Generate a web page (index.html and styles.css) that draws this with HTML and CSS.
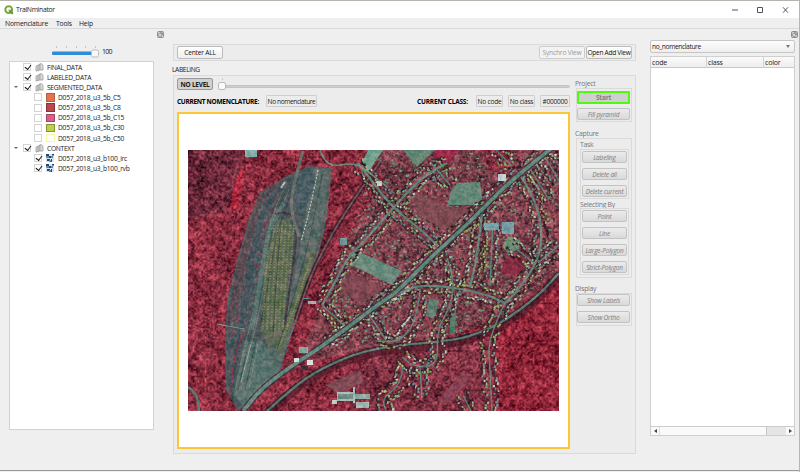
FILE: index.html
```html
<!DOCTYPE html>
<html lang="en">
<head>
<meta charset="utf-8">
<title>TraiNminator</title>
<link rel="stylesheet" href="styles.css">
</head>
<body>
<svg width="0" height="0" class="defs">
  <symbol id="float" viewBox="0 0 7 7"><rect x=".5" y=".5" width="6" height="6" rx="1" fill="#ccc" stroke="#8d8d8d"/><rect x="1.8" y="2.8" width="2.4" height="2.4" fill="#eee" stroke="#777" stroke-width=".6"/><path d="M3 1.8h2.3V4" fill="none" stroke="#777" stroke-width=".7"/></symbol>
  <symbol id="group" viewBox="0 0 9 9"><path d="M1 3.2 3.2 2v5L1 8.2z" fill="#ddd" stroke="#8c8c8c" stroke-width=".7"/><path d="M3.2 2.2 5 1v5.600L3.200 8z" fill="#eee" stroke="#8c8c8c" stroke-width=".7"/><path d="M5 .8h1.600l1.400 1.400V7H5z" fill="#ddd" stroke="#8c8c8c" stroke-width=".7"/></symbol>
  <symbol id="raster" viewBox="0 0 8 8"><path fill="#d5e3f0" d="M0 0h8v8H0z"/><path fill="#274766" d="M0 0h3v2H0zM3 2h2v2H3zM6 0h2v1.500H6zM1 5h3v2H1zM5 5h1v3H5z"/><path fill="#638db2" d="M0 2h3v2H0zM5 2h2v2H5zM3 6h2v2H3z"/></symbol>
</svg>
<div class="window">
  <header class="titlebar">
    <svg class="logo" viewBox="0 0 10 10"><circle cx="4.700" cy="4.700" r="3.400" fill="none" stroke="#76a83a" stroke-width="2"/><path d="M5 5l3.800 3.800" stroke="#5c9632" stroke-width="2"/><path d="M4.500 4.500h2L5 6z" fill="#e8c53c"/></svg>
    <span class="title">TraiNminator</span>
    <svg class="controls" viewBox="0 0 60 10"><path d="M1 5h6M26.500 2.500h5v5h-5zM52 2.300l5 5.400M57 2.300l-5 5.400" fill="none" stroke="#555" stroke-width="1"/></svg>
  </header>
  <nav class="menu"><span class="m1">Nomenclature</span><span class="m2">Tools</span><span>Help</span></nav>
  <main class="body">
    <aside class="left">
      <svg class="float"><use href="#float"/></svg>
      <div class="opacity">
        <svg class="slider" viewBox="0 0 48 14"><path d="M4.500 1v2M14.500 1v2M24.500 1v2M33.500 1v2M43.500 1v2" stroke="#c6c6c6"/><rect x="0" y="6.500" width="42" height="3.600" rx="1" fill="#308cd6"/><rect x="39.500" y="5" width="7" height="7" rx="1.500" fill="#fafafa" stroke="#bbb"/></svg>
        <span class="pct">100</span>
      </div>
      <div class="tree">
        <div class="row"><i class="arrow"></i><i class="check on"></i><svg class="gi"><use href="#group"/></svg><span>FINAL_DATA</span></div>
        <div class="row"><i class="arrow"></i><i class="check on"></i><svg class="gi"><use href="#group"/></svg><span>LABELED_DATA</span></div>
        <div class="row"><i class="arrow open"></i><i class="check on"></i><svg class="gi"><use href="#group"/></svg><span>SEGMENTED_DATA</span></div>
        <div class="row sub"><i class="check"></i><i class="sw c5"></i><span>D057_2018_u3_5b_C5</span></div>
        <div class="row sub"><i class="check"></i><i class="sw c8"></i><span>D057_2018_u3_5b_C8</span></div>
        <div class="row sub"><i class="check"></i><i class="sw c15"></i><span>D057_2018_u3_5b_C15</span></div>
        <div class="row sub"><i class="check"></i><i class="sw c30"></i><span>D057_2018_u3_5b_C30</span></div>
        <div class="row sub"><i class="check"></i><i class="sw c50"></i><span>D057_2018_u3_5b_C50</span></div>
        <div class="row"><i class="arrow open"></i><i class="check on"></i><svg class="gi"><use href="#group"/></svg><span>CONTEXT</span></div>
        <div class="row sub"><i class="check on"></i><svg class="ri"><use href="#raster"/></svg><span>D057_2018_u3_b100_irc</span></div>
        <div class="row sub"><i class="check on"></i><svg class="ri"><use href="#raster"/></svg><span>D057_2018_u3_b100_rvb</span></div>
      </div>
    </aside>
    <section class="center">
      <div class="toolbar"><button class="btn">Center ALL</button><span class="grow"></span><button class="btn off">Synchro View</button><button class="btn">Open Add View</button></div>
      <div class="caption">LABELING</div>
      <div class="labeling">
        <div class="work">
          <div class="level"><span class="nolevel">NO LEVEL</span><div class="track"><i class="tick"></i><i class="knob"></i></div></div>
          <div class="current"><b class="cn">CURRENT NOMENCLATURE:</b><span class="val nom">No nomenclature</span><span class="grow"></span><b class="cc">CURRENT CLASS:</b><span class="val code">No code</span><span class="val cls">No class</span><span class="val hex">#000000</span></div>
          <div class="view"><canvas id="map" width="371" height="261"></canvas></div>
        </div>
        <div class="side">
          <div class="lbl">Project</div>
          <div class="box project"><button class="act start">Start</button><button class="act">Fill pyramid</button></div>
          <div class="lbl capl">Capture</div>
          <div class="box capture">
            <div class="lbl in">Task</div>
            <div class="box inner"><button class="act">Labeling</button><button class="act">Delete all</button><button class="act">Delete current</button></div>
            <div class="lbl in">Selecting By</div>
            <div class="box inner"><button class="act">Point</button><button class="act">Line</button><button class="act">Large-Polygon</button><button class="act">Strict-Polygon</button></div>
          </div>
          <div class="lbl disl">Display</div>
          <div class="box display"><button class="act">Show Labels</button><button class="act">Show Ortho</button></div>
        </div>
      </div>
    </section>
    <aside class="right">
      <svg class="float"><use href="#float"/></svg>
      <div class="combo"><span>no_nomenclature</span><i></i></div>
      <div class="table">
        <div class="head"><span>code</span><span>class</span><span>color</span></div>
        <div class="empty"></div>
        <div class="scroll"><i class="la"></i><i class="thumb"></i><i class="rest"></i><i class="ra"></i></div>
      </div>
    </aside>
  </main>
</div>
<script src="map.js"></script>
</body>
</html>
```
FILE: styles.css
```css
* { box-sizing: border-box; }
body { margin: 0; background: #efefef; font: 7px/10px "Open Sans", "Noto Sans", sans-serif; letter-spacing: -.2px; color: #1a1a1a; }
.defs { position: absolute; }
.window { width: 800px; height: 472px; border-top: 1px solid #b5b5b0; border-right: 1px solid #b5b5b5; display: flex; flex-direction: column; overflow: hidden; }
.titlebar { height: 17px; background: #fff; display: flex; align-items: center; padding-left: 4px; flex: none; }
.logo { width: 10px; height: 10px; }
.title { margin-left: 2px; font-size: 6.800px; letter-spacing: -.3px; flex: 1; }
.controls { width: 60px; height: 10px; margin-right: 8px; }
.menu { height: 11px; flex: none; border-bottom: 1px solid #dadada; padding-left: 5px; display: flex; line-height: 11px; font-size: 6.800px; letter-spacing: -.2px; }
.m1 { width: 51px; } .m2 { width: 23px; }
.body { height: 442px; flex: none; display: flex; border-bottom: 1px solid #999; }
.left { width: 173px; padding: 2px 0 0 9px; display: flex; flex-direction: column; }
.float { width: 7px; height: 7px; flex: none; align-self: flex-end; margin-right: 9px; }
.opacity { display: flex; height: 23px; padding: 7px 0 0 43px; flex: none; }
.slider { width: 48px; height: 14px; flex: none; }
.pct { margin-left: 2px; letter-spacing: -.7px; padding-top: 2px; }
.tree { width: 145px; height: 369px; border: 1px solid #d2d2d2; background: #fff; }
.row { display: flex; align-items: center; height: 10.15px; white-space: nowrap; font-size: 6.700px; letter-spacing: -.3px; }
.row span { padding-top: 1px; }
.sub span { letter-spacing: -.26px; }
.arrow { width: 13px; display: flex; justify-content: center; padding-right: 2px; }
.arrow.open::after { content: ""; border: 2.500px solid transparent; border-top: 2.500px solid #666; border-bottom: 0; }
.check { width: 8px; height: 8px; border: 1px solid #d4d4d4; background: #fff; flex: none; display: block; }
.check.on::after { content: ""; display: block; width: 3px; height: 5px; margin: 0 0 0 1.500px; border: solid #111; border-width: 0 1px 1px 0; transform: translateY(-.5px) rotate(38deg); }
.gi { width: 9px; height: 9px; margin: 0 3px 0 4px; }
.sub { padding-left: 24px; }
.sw { width: 9px; height: 8.500px; margin: 0 3px 0 4px; border: 1px solid #a9654a; }
.c5 { background: #e77148; } .c8 { background: #b7484b; border-color: #873337; } .c15 { background: #e15989; border-color: #a34565; } .c30 { background: #bccf48; border-color: #87953a; } .c50 { background: #fff; border-color: #f7f9a2; }
.ri { width: 8px; height: 8px; margin: 0 4px; }
.center { width: 463px; padding-top: 15px; flex: none; }
.toolbar { height: 17px; border: 1px solid #dadada; background: #ececec; display: flex; padding: 1px 3px; gap: 1px; }
.grow { flex: 1; }
.btn, .act { font: inherit; height: 12px; padding: 0; border: 1px solid #bdbdbd; border-radius: 2px; background: linear-gradient(#fff, #eee); color: #111; line-height: 9px; white-space: nowrap; }
.btn { width: 46px; font-size: 6.600px; letter-spacing: -.3px; height: 13px; line-height: 10px; }
.btn:first-child { letter-spacing: -.2px; }
.btn.off { color: #999; background: #f3f3f3; border-color: #ccc; letter-spacing: -.15px; }
.caption { height: 14px; line-height: 17px; margin-left: -1px; font-size: 6.600px; letter-spacing: -.35px; }
.labeling { height: 379px; border: 1px solid #dadada; background: #ececec; display: flex; padding: 2px 3px 3px; }
.work { width: 393px; flex: none; }
.level { display: flex; height: 13px; gap: 5px; }
.nolevel { width: 36px; height: 12px; border: 1px solid #999; border-radius: 2px; background: #d0d0d0; font-weight: 700; font-size: 6.500px; line-height: 11px; text-align: center; letter-spacing: -.25px; flex: none; }
.track { flex: 1; height: 3px; margin-top: 7px; background: #d0d0d0; border: 1px solid #c3c3c3; border-radius: 2px; position: relative; }
.knob { position: absolute; left: -1px; top: -4px; width: 8px; height: 8px; border: 1px solid #bbb; border-radius: 2px; background: #fafafa; }
.tick { position: absolute; left: 3px; top: -8px; width: 1px; height: 2px; background: #ccc; }
.current { display: flex; height: 20px; padding-top: 4px; }
.current b { font-size: 6.500px; line-height: 13px; color: #000; white-space: nowrap; }
.cn { width: 89px; letter-spacing: -.3px; } .cc { width: 59px; letter-spacing: -.17px; }
.val { height: 12px; border: 1px solid #cfcfcf; border-radius: 1px; line-height: 11px; text-align: center; margin-right: 5px; white-space: nowrap; font-size: 6.600px; letter-spacing: -.25px; }
.nom { width: 51px; letter-spacing: -.4px; } .code { width: 27px; } .cls { width: 27px; } .hex { width: 30px; margin-right: 0; }
.view { height: 337px; margin-top: 1px; border: 2px solid #fbc637; background: #fff; display: flex; padding: 36px 0 0 9px; }
#map { width: 371px; height: 261px; display: block; }
.side { width: 57px; margin-left: 5px; color: #777; }
.lbl { height: 10px; line-height: 11px; font-size: 6.800px; letter-spacing: -.25px; }
.box { border: 1px solid #dadada; margin-left: 1px; width: 56px; display: flex; flex-direction: column; }
.act { height: 12px; flex: none; font-style: italic; color: #808080; background: linear-gradient(#ebebeb, #d9d9d9); border-color: #c3c3c3; letter-spacing: -.2px; font-size: 6.500px; }
.project { height: 34px; padding: 2px 1px 0 0; gap: 5px; }
.start { border: 2px solid #50fa0e; font-weight: 700; font-style: normal; background: #cfcfcf; border-radius: 1px; height: 13px; line-height: 8px; margin-bottom: -1px; letter-spacing: -.2px; }
.capl { margin-top: 6px; }
.disl { margin-top: 5px; }
.capture { height: 140px; padding: 0 2px 0 3px; }
.in { height: 10px; flex: none; }
.inner { margin: 0; width: 49px; padding: 1px; gap: 5px; flex: none; }
.inner + .in { height: 9px; }
.inner:nth-of-type(2) { height: 50px; }
.inner:nth-of-type(4) { height: 67px; }
.display { height: 33px; padding: 0 1px 0 0; gap: 5px; }
.right { width: 163px; padding: 2px 0 0 14px; display: flex; flex-direction: column; }
.right .float { margin-right: 1px; }
.combo { width: 145px; height: 13px; margin-top: 2px; border: 1px solid #c5c5c5; border-radius: 2px; background: linear-gradient(#fdfdfd, #eee); padding: 0 4px 0 1px; display: flex; justify-content: space-between; align-items: center; flex: none; font-size: 6.700px; letter-spacing: -.4px; }
.combo span { padding-top: 1px; }
.combo i { border: 2.500px solid transparent; border-top: 3px solid #777; border-bottom: 0; }
.table { width: 145px; height: 380px; margin-top: 3px; border: 1px solid #cfcfcf; background: #fff; display: flex; flex-direction: column; flex: none; }
.head { height: 11px; display: grid; grid-template-columns: 56px 57px 1fr; border-bottom: 1px solid #c8c8c8; background: linear-gradient(#fafafa, #eee); line-height: 11px; }
.head span { padding-left: 1px; border-right: 1px solid #d2d2d2; }
.head span:last-child { border-right: 0; }
.empty { flex: 1; }
.scroll { height: 9px; border-top: 1px solid #ccc; background: #e5e5e5; display: flex; align-items: center; }
.scroll i { height: 8px; }
.la, .ra { width: 8px; background: #fafafa; display: flex; align-items: center; justify-content: center; }
.la::after, .ra::after { content: ""; border: 2px solid transparent; }
.la::after { border-right: 3px solid #444; border-left: 0; } .ra::after { border-left: 3px solid #444; border-right: 0; }
.thumb { width: 108px; background: #fafafa; border-left: 1px solid #ddd; border-right: 1px solid #c5c5c5; } .rest { flex: 1; }
```
FILE: map.js
```js
// Draws the infrared aerial view in map-canvas coordinates.
const canvas = document.getElementById('map');
const ctx = canvas.getContext('2d');
const W = 371, H = 261, OX = 188, OY = 150;
let seed = 1234567;
const rnd = () => { seed = (seed * 1664525 + 1013904223) >>> 0; return seed / 4294967296; };
ctx.translate(-OX, -OY);

function trace(pts) {
  ctx.beginPath();
  ctx.moveTo(pts[0], pts[1]);
  for (let i = 2; i < pts.length; i += 2) ctx.lineTo(pts[i], pts[i + 1]);
}
// Smooth open curve through the midpoints of the given polyline.
function curve(pts) {
  ctx.beginPath();
  ctx.moveTo(pts[0], pts[1]);
  const n = pts.length;
  for (let i = 2; i < n - 2; i += 2)
    ctx.quadraticCurveTo(pts[i], pts[i + 1], (pts[i] + pts[i + 2]) / 2, (pts[i + 1] + pts[i + 3]) / 2);
  ctx.lineTo(pts[n - 2], pts[n - 1]);
}
function poly(color, ...pts) { trace(pts); ctx.closePath(); ctx.fillStyle = color; ctx.fill(); }
function line(color, width, pts, dash) {
  curve(pts); ctx.strokeStyle = color; ctx.lineWidth = width; ctx.lineJoin = 'round';
  ctx.setLineDash(dash || []); ctx.stroke(); ctx.setLineDash([]);
}
function along(pts, step, fn) {
  for (let i = 0; i + 3 < pts.length; i += 2) {
    const dx = pts[i + 2] - pts[i], dy = pts[i + 3] - pts[i + 1], len = Math.hypot(dx, dy);
    for (let t = 0; t < len; t += step) fn(pts[i] + dx * t / len, pts[i + 1] + dy * t / len, dx / len, dy / len);
  }
}
const roofs = ['#93b39c', '#9cb06b', '#bccdb8', '#739688', '#86a052', '#678990', '#a9b980'];
function houses(pts) {
  along(pts, 2.7, (x, y, ux, uy) => {
    for (const s of [-1, 1]) {
      const d = s * (3 + rnd() * 5);
      ctx.save();
      ctx.translate(x - uy * d, y + ux * d);
      ctx.rotate(Math.atan2(uy, ux) + rnd() * .4);
      ctx.fillStyle = '#41212e'; ctx.fillRect(-1, -.5, 2.8, 2.8);
      if (rnd() > .15) { ctx.fillStyle = roofs[rnd() * roofs.length | 0]; ctx.fillRect(-1, -1, 1.6 + rnd() * 1.8, 1.4 + rnd()); }
      ctx.restore();
    }
  });
}
function noise(amount, coarse) {
  const img = ctx.getImageData(0, 0, W, H), p = img.data;
  const grid = n => {
    const gw = Math.ceil(W / n) + 2, g = Array.from({ length: gw * (Math.ceil(H / n) + 2) }, rnd);
    return (x, y) => {
      const a = x / n | 0, b = y / n | 0, u = x / n - a, v = y / n - b, k = b * gw + a;
      return (g[k] * (1 - u) + g[k + 1] * u) * (1 - v) + (g[k + gw] * (1 - u) + g[k + gw + 1] * u) * v - .5;
    };
  };
  const a = grid(1.7), b = grid(4), c = grid(17);
  for (let y = 0; y < H; y++) for (let x = 0; x < W; x++) {
    const d = amount * (a(x, y) * 1.2 + b(x, y) * .7 + (rnd() - .5) * .3) + coarse * c(x, y);
    const i = (y * W + x) * 4;
    p[i] += d * 110; p[i + 1] += d * 56; p[i + 2] += d * 60;
  }
  ctx.putImageData(img, 0, 0);
}

// Ground cover
ctx.fillStyle = '#872d3e'; ctx.fillRect(OX, OY, W, H);
poly('#6c2a3b', 188, 150, 242, 150, 238, 185, 231, 211, 188, 222);
poly('#a12438', 244, 168, 238, 210, 229, 210, 236, 178);
poly('#7d414c', 368, 150, 559, 150, 559, 270, 530, 296, 500, 319, 440, 338, 375, 346, 318, 360, 305, 345, 322, 305, 350, 235, 385, 180);
poly('#872e3e', 329, 172, 372, 168, 346, 208, 323, 248);
poly('#8d2638', 505, 327, 559, 284, 559, 411, 496, 411, 492, 345);
poly('#803343', 365, 355, 488, 342, 490, 411, 350, 411);
poly('#7b2638', 480, 150, 511, 150, 504, 176, 491, 172);
noise(.75, .3);
for (let i = 0; i < 3900; i++) {
  const x = 328 + rnd() * 231, y = 151 + rnd() * 192;
  if (x < 372 - (y - 165) * .35 || y > 350 - Math.max(0, x - 460) * .85) continue;
  ctx.fillStyle = ['#4a2431', '#9a4354', '#779582', '#5d2c38', '#65806e', '#72404b'][rnd() * 6 | 0];
  ctx.fillRect(x, y, 1 + rnd() * 2, 1 + rnd() * 1.3);
}

// Quarry
poly('#4f595d', 331, 168, 309, 166, 285, 177, 260, 192, 249, 219, 239, 254, 228, 296, 225, 333, 226, 390, 238, 411, 260, 395, 280, 371, 294, 326, 312, 277, 325, 230);
poly('#5a4c52', 286, 178, 260, 193, 237, 265, 226, 330, 231, 337, 246, 320, 251, 250, 276, 210);
for (let i = 0; i < 520; i++) {
  const t = rnd(), x = 262 - t * 36 + rnd() * 16, y = 192 + t * 150;
  ctx.fillStyle = ['#485c60', '#6a434d', '#596869'][rnd() * 3 | 0]; ctx.fillRect(x, y, 1.500, 3);
}
poly('#596a67', 313, 169, 332, 168, 327, 216, 313, 275, 293, 330, 278, 374, 263, 350, 282, 333, 298, 258);
poly('#4b5d63', 299, 172, 312, 168, 315, 183, 302, 217, 292, 200);
poly('#5e6955', 277, 220, 290, 218, 294, 232, 287, 290, 283, 326, 270, 350, 261, 331, 264, 267);
poly('#5e6a56', 309, 248, 315, 254, 299, 308, 280, 356, 273, 344, 293, 303);
poly('#59726d', 244, 342, 262, 341, 281, 372, 256, 394, 243, 405, 234, 396);
line('#45545c', 5, [285, 182, 270, 198, 257, 230, 249, 280, 239, 335, 231, 388]);
for (const [dx, col] of [[0, '#718070'], [3, '#414b52'], [6, '#6f7d72'], [10, '#3d4449']])
  line(col, .8, [283 + dx, 190, 270 + dx, 219, 261 + dx, 265, 254 + dx, 310, 245 + dx, 345, 235 + dx, 390]);
line('#5b7672', 4, [284, 203, 271, 222, 264, 255, 259, 293, 252, 330]);
for (let x = 266; x < 293; x += 4) line('#838f5a', 1.6, [x + 4, 225, x, 270, x - 3, 331], [1.2, 1.6]);
line('#414d42', 1, [281, 223, 276, 280, 273, 337]);
line('#7f8d58', 2, [311, 258, 296, 305, 279, 346], [1.4, 1]);
line('#433c43', 2, [275, 214, 284, 212, 295, 216, 297, 240, 290, 285, 285, 325]);
line('#4a4e50', 1, [322, 175, 311, 235, 296, 290, 277, 350]);
line('#6f716b', 3, [303, 151, 295, 178, 290, 208, 299, 237]);
line('#9b3042', 1.3, [244, 332, 236, 350, 232, 373, 231, 393]);
line('#7b978f', 1, [217, 324, 244, 329]);
line('#d1dbd2', 1, [318, 170, 311, 205, 301, 242], [2, 1.5]);
line('#6e5358', 1.2, [331, 170, 326, 215, 312, 270, 292, 327]);
line('#90a59b', 1, [251, 344, 241, 382]);
line('#6b8c83', 1, [258, 344, 249, 388]);
line('#aab7a8', 2, [285, 182, 281, 188]);

// Open fields
poly('#638674', 403, 150, 435, 150, 417, 167);
poly('#9b2b4b', 435, 150, 459, 150, 447, 165, 433, 156);
poly('#668878', 457, 183, 480, 182, 483, 205, 447, 205, 451, 191);
poly('#68897b', 355, 250, 402, 271, 392, 285, 350, 264);
poly('#71a08f', 368, 150, 383, 150, 369, 171, 361, 165);
poly('#7d4a51', 411, 190, 447, 207, 473, 211, 446, 231, 416, 213);
poly('#7e4650', 337, 267, 387, 288, 362, 303, 335, 288);
poly('#7c4953', 326, 385, 360, 370, 364, 382, 337, 394);
poly('#864152', 437, 401, 461, 374, 470, 374, 468, 383, 447, 403);
poly('#862e42', 505, 258, 521, 254, 529, 265, 515, 276, 501, 272);
poly('#587c68', 450, 309, 456, 309, 455, 334, 450, 334);
poly('#5c7b6e', 429, 298, 439, 300, 435, 319, 426, 316);
poly('#6a8c70', 508, 236, 520, 240, 519, 249, 508, 253, 502, 246);

// Railway cuttings
const rail = [267, 411, 288, 392, 313, 373, 347, 357, 370, 350, 400, 345, 437, 342, 470, 337, 503, 322, 537, 297, 559, 273];
line('#5d1f2e', 9, rail.map((v, i) => i % 2 ? v + 3 : v));
line('#43262f', 5, rail);
line('#607a73', 2.2, rail);
line('#4c2532', 5, [380, 162, 347, 208, 313, 268, 296, 320]);
line('#75555a', 1.6, [380, 162, 347, 208, 313, 268, 296, 320]);

// Streets and buildings
const main = [553, 147, 534, 162, 503, 188, 470, 222, 433, 255, 397, 292, 380, 303, 327, 343, 290, 367, 261, 389, 243, 411];
const streets = [
  [447, 163, 437, 168, 417, 182, 393, 208, 370, 235, 347, 258, 330, 292, 322, 305],
  [358, 163, 371, 180, 393, 208, 419, 228, 440, 248],
  [520, 175, 533, 195, 542, 225, 540, 258, 517, 292, 505, 303],
  [386, 300, 407, 287, 437, 285, 483, 293, 505, 303],
  [482, 212, 478, 252, 470, 287],
  [447, 258, 455, 280, 450, 307, 437, 330, 438, 357, 431, 367, 413, 366, 402, 357],
  [420, 290, 417, 320, 400, 342, 376, 341],
  [505, 303, 488, 337, 490, 370, 492, 411],
  [420, 367, 422, 398], [403, 367, 401, 385, 382, 398, 386, 411],
  [538, 263, 559, 245], [512, 166, 496, 150], [493, 222, 490, 285],
  [322, 305, 348, 329], [545, 157, 559, 181], [531, 170, 548, 198],
  [450, 185, 432, 164], [463, 395, 471, 411], [368, 313, 386, 340], [510, 244, 535, 264]
];
houses(main.slice(0, 16));
streets.forEach(houses);
streets.forEach((s, i) => line('#66857a', i < 5 ? 2.2 : 1.4, s));
line('#493743', 6, main);
line('#64897d', 3.6, main);
line('#708c7c', 1.6, [320, 150, 326, 168, 355, 162, 370, 173, 388, 188]);
line('#64827a', 2.5, [188, 387, 197, 393, 199, 411]);
line('#7a3245', 1, [236, 211, 218, 275, 209, 337, 213, 360]);
const block = (c, x, y, w, h) => { ctx.fillStyle = c; ctx.fillRect(x, y, w, h); };
block('#6e9fa6', 484, 223, 15, 7); block('#789da5', 502, 222, 12, 12); block('#bdcccd', 498, 174, 8, 7);
block('#a9bab6', 337, 392, 17, 9); block('#728d85', 338, 394, 16, 5); block('#8fa9a2', 354, 394, 16, 5);
block('#9dafaa', 356, 402, 13, 6); block('#c6d2cd', 332, 400, 5, 4); block('#d4dedb', 307, 360, 6, 5);
block('#d4dedb', 294, 358, 5, 4); block('#7fa69e', 299, 347, 9, 6); block('#302c3e', 301, 366, 7, 4);
block('#a8beba', 353, 387, 2, 16); block('#64888a', 303, 298, 6, 1); block('#a0b5b1', 308, 301, 8, 3);
block('#7eada7', 245, 150, 12, 7); block('#b3c8c0', 377, 181, 5, 5); block('#77999a', 340, 238, 7, 7);
noise(.38, .04);
```
